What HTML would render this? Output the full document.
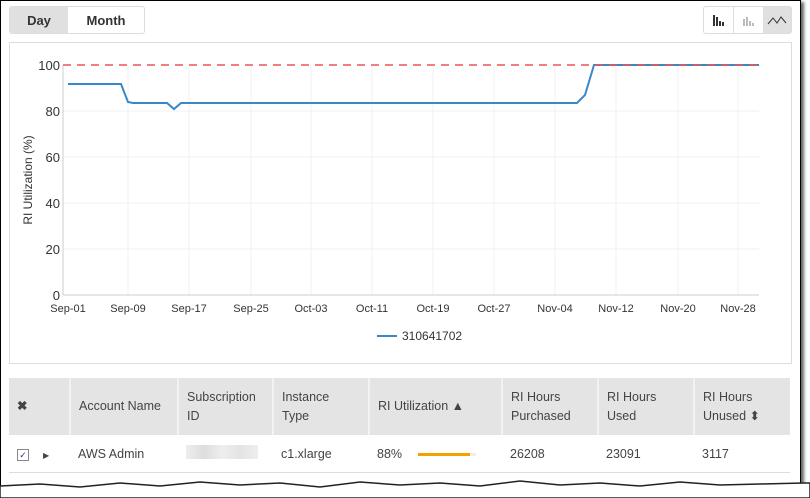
<!DOCTYPE html>
<html><head><style>
body{margin:0;width:810px;height:498px;background:#fff;font-family:"Liberation Sans",Arial,sans-serif;position:relative;overflow:hidden;color:#333}
.frame{position:absolute;left:0;top:0;width:799px;height:490px;border:1px solid #000;border-bottom:none;box-shadow:3px 2px 3px #666}
.btn{position:absolute;top:6px;height:26px;border:1px solid #ddd;border-radius:3px;display:flex;overflow:hidden}
.btn div{display:flex;align-items:center;justify-content:center;font-weight:bold;font-size:13px;color:#333}
.panel{position:absolute;left:9px;top:42px;width:781px;height:320px;border:1px solid #ddd}
table{position:absolute;left:9px;top:378px;width:781px;table-layout:fixed;border-collapse:collapse;font-size:12.5px;color:#444}
th{background:#e4e4e4;font-weight:normal;text-align:left;vertical-align:middle;padding:0 8px;height:57px;line-height:19px;border-left:2px solid #f2f2f2;overflow:hidden;white-space:nowrap}
th:first-child{border-left:none}
td{height:37px;padding:0 8px;border-bottom:1px solid #ddd;white-space:nowrap;overflow:hidden}
</style></head><body>
<div class="frame"></div>
<div class="btn" style="left:9px;width:134px"><div style="width:58px;background:#e0e0e0">Day</div><div style="flex:1">Month</div></div>
<div class="btn" style="left:703px;width:87px">
<div style="width:29px;border-right:1px solid #ddd"><svg width="14" height="12"><rect x="1" y="1" width="2" height="11" fill="#333"/><rect x="4" y="3" width="2" height="9" fill="#333"/><rect x="7" y="7" width="2" height="5" fill="#333"/><rect x="10" y="8" width="2" height="4" fill="#333"/></svg></div>
<div style="width:29px"><svg width="14" height="12"><rect x="1" y="5" width="2" height="7" fill="#bbb"/><rect x="4" y="3" width="2" height="9" fill="#bbb"/><rect x="7" y="7" width="2" height="5" fill="#bbb"/><rect x="10" y="9" width="2" height="3" fill="#bbb"/></svg></div>
<div style="flex:1;background:#e0e0e0"><svg width="20" height="12"><polyline points="1,10 6,4 10,9 14,3 19,9" fill="none" stroke="#333" stroke-width="1"/></svg></div>
</div>
<div class="panel"></div>
<svg style="position:absolute;left:0;top:0" width="810" height="370">
<g stroke="#f2f2f2" stroke-width="1">
<line x1="63" y1="111" x2="759" y2="111"/><line x1="63" y1="157" x2="759" y2="157"/><line x1="63" y1="203" x2="759" y2="203"/><line x1="63" y1="249" x2="759" y2="249"/>
<line x1="128" y1="65" x2="128" y2="295"/><line x1="189" y1="65" x2="189" y2="295"/><line x1="251" y1="65" x2="251" y2="295"/><line x1="311" y1="65" x2="311" y2="295"/><line x1="372" y1="65" x2="372" y2="295"/><line x1="433" y1="65" x2="433" y2="295"/><line x1="494" y1="65" x2="494" y2="295"/><line x1="555" y1="65" x2="555" y2="295"/><line x1="616" y1="65" x2="616" y2="295"/><line x1="678" y1="65" x2="678" y2="295"/><line x1="738" y1="65" x2="738" y2="295"/>
</g>
<line x1="63" y1="65" x2="63" y2="295" stroke="#ccc"/>
<line x1="63" y1="295" x2="759" y2="295" stroke="#ccc"/>
<polyline points="68,84 121,84 128,102 133,103 167,103 174,109 181,103 577,103 585,95 594,65 759,65" fill="none" stroke="#3a87c8" stroke-width="2"/>
<line x1="63" y1="65" x2="759" y2="65" stroke="#e55" stroke-width="1.5" stroke-dasharray="8,6"/>
<g font-size="13" fill="#333" text-anchor="end">
<text x="60" y="70">100</text><text x="60" y="116">80</text><text x="60" y="162">60</text><text x="60" y="208">40</text><text x="60" y="254">20</text><text x="60" y="300">0</text></g>
<text transform="translate(32,180) rotate(-90)" font-size="12" fill="#333" text-anchor="middle">RI Utilization (%)</text>
<g font-size="11" fill="#333" text-anchor="middle">
<text x="68" y="312">Sep-01</text><text x="128" y="312">Sep-09</text><text x="189" y="312">Sep-17</text><text x="251" y="312">Sep-25</text><text x="311" y="312">Oct-03</text><text x="372" y="312">Oct-11</text><text x="433" y="312">Oct-19</text><text x="494" y="312">Oct-27</text><text x="555" y="312">Nov-04</text><text x="616" y="312">Nov-12</text><text x="678" y="312">Nov-20</text><text x="738" y="312">Nov-28</text></g>
<line x1="377" y1="336" x2="397" y2="336" stroke="#3a87c8" stroke-width="2"/>
<text x="402" y="340" font-size="12" fill="#333">310641702</text>
</svg>
<table>
<colgroup><col style="width:61px"><col style="width:108px"><col style="width:95px"><col style="width:96px"><col style="width:133px"><col style="width:96px"><col style="width:96px"><col style="width:96px"></colgroup>
<tr><th style="font-weight:bold">✖</th><th>Account Name</th><th>Subscription<br>ID</th><th>Instance<br>Type</th><th>RI Utilization ▲</th><th>RI Hours<br>Purchased</th><th>RI Hours<br>Used</th><th>RI Hours<br>Unused ⬍</th></tr>
<tr><td><span style="display:inline-block;width:10px;height:10px;border:1px solid #888;font-size:9px;line-height:10px;text-align:center;color:#33a">✓</span><span style="margin-left:14px;font-size:8px">▶</span></td><td>AWS Admin</td><td><span style="display:inline-block;width:72px;height:14px;background:linear-gradient(90deg,#eee,#ddd,#eee,#e4e4e4,#eee)"></span></td><td>c1.xlarge</td><td>88% <span style="display:inline-block;width:58px;height:3px;background:#eee;margin-left:12px;vertical-align:middle"><span style="display:block;width:52px;height:3px;background:#f5a000"></span></span></td><td>26208</td><td>23091</td><td>3117</td></tr>
</table>
<svg style="position:absolute;left:0;top:478px" width="810" height="20"><path d="M0,8 L40,6 L80,9 L120,5 L160,8 L200,4 L240,7 L280,5 L320,9 L360,4 L400,7 L440,5 L480,8 L520,3 L560,7 L600,5 L640,8 L680,4 L720,7 L760,6 L804,5 L810,5 L810,20 L0,20Z" fill="#fff" stroke="#222" stroke-width="1.5"/></svg>
</body></html>
